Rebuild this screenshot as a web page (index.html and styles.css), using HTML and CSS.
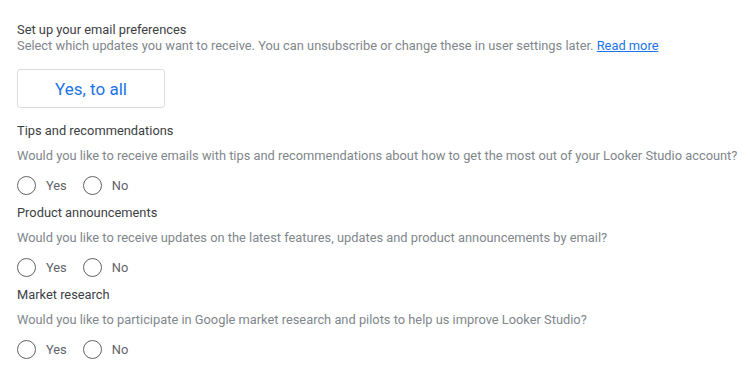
FILE: index.html
```html
<!DOCTYPE html>
<html lang="en">
<head>
    <meta charset="UTF-8">
    <meta name="viewport" content="width=device-width, initial-scale=1.0">
    <title>Email preferences</title>
    <link rel="stylesheet" href="styles.css">
</head>
<body>

<div class="prefs">
    <div class="intro">
        <div class="intro-title">Set up your email preferences</div>
        <div class="intro-text">Select which updates you want to receive. You can unsubscribe or change these in user settings later. <a href="">Read more</a></div>
    </div>

    <button class="all-btn" type="button">Yes, to all</button>

    <div class="section">
        <div class="section-title">Tips and recommendations</div>
        <div class="section-text">Would you like to receive emails with tips and recommendations about how to get the most out of your Looker Studio account?</div>
        <div class="options">
            <label class="radio"><input type="radio" name="tips"><span class="circle"></span>Yes</label>
            <label class="radio"><input type="radio" name="tips"><span class="circle"></span>No</label>
        </div>
    </div>

    <div class="section">
        <div class="section-title">Product announcements</div>
        <div class="section-text">Would you like to receive updates on the latest features, updates and product announcements by email?</div>
        <div class="options">
            <label class="radio"><input type="radio" name="product"><span class="circle"></span>Yes</label>
            <label class="radio"><input type="radio" name="product"><span class="circle"></span>No</label>
        </div>
    </div>

    <div class="section">
        <div class="section-title">Market research</div>
        <div class="section-text">Would you like to participate in Google market research and pilots to help us improve Looker Studio?</div>
        <div class="options">
            <label class="radio"><input type="radio" name="research"><span class="circle"></span>Yes</label>
            <label class="radio"><input type="radio" name="research"><span class="circle"></span>No</label>
        </div>
    </div>
</div>

</body>
</html>
```

FILE: styles.css
```css
body {
    font-family: Roboto, "Liberation Sans", Arial, sans-serif;
    margin: 0;
    padding: 0;
    background-color: #fff;
}

.prefs {
    padding: 22px 0 0 17px;
    white-space: nowrap;
}

.intro-title {
    font-size: 12.85px;
    line-height: 16px;
    color: #3c4043;
}
.intro-text {
    font-size: 12.85px;
    line-height: 16px;
    color: #80868b;
}
.intro-text a {
    color: #1a73e8;
    text-decoration: underline;
}

.all-btn {
    display: block;
    margin-top: 15px;
    width: 148px;
    height: 39px;
    padding: 0;
    border: 1px solid #dadce0;
    border-radius: 3px;
    background-color: #fff;
    color: #1a73e8;
    font-family: inherit;
    font-size: 17px;
    cursor: pointer;
}

.section {
    padding-top: 14px;
}
.section + .section {
    padding-top: 7px;
}
.section-title {
    font-size: 12.85px;
    line-height: 17px;
    color: #3c4043;
}
.section-text {
    margin-top: 8px;
    font-size: 12.85px;
    line-height: 17px;
    color: #80868b;
}

.options {
    display: flex;
    gap: 16px;
    margin-top: 9px;
    height: 24px;
    align-items: center;
}
.radio {
    display: flex;
    align-items: center;
    font-size: 12.85px;
    color: #5f6368;
    cursor: pointer;
}
.radio input {
    display: none;
}
.radio .circle {
    box-sizing: border-box;
    width: 19px;
    height: 19px;
    border: 1.5px solid #5f6368;
    border-radius: 50%;
    margin-right: 10px;
}
```
